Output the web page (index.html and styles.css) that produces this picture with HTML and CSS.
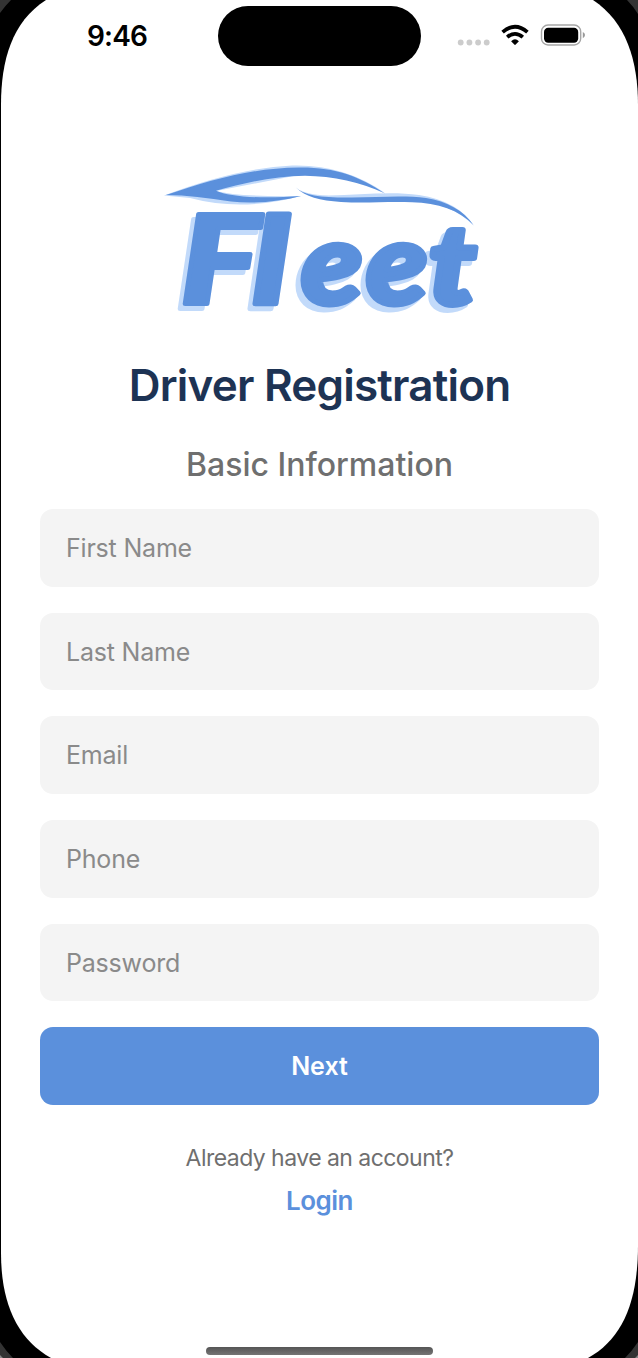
FILE: index.html
```html
<!DOCTYPE html>
<html lang="en">
<head>
<meta charset="utf-8">
<title>Driver Registration</title>
<link rel="stylesheet" href="styles.css">
</head>
<body>
<div class="device">
  <svg class="bezel" viewBox="0 0 638 1358" aria-hidden="true">
    <rect width="638" height="1358" fill="#000"/>
    <path fill="#333" d="M0 0H11Q5 6 0 13ZM638 0H627Q633 6 638 14ZM0 1342Q6 1351 13 1358H0ZM638 1342Q632 1351 625 1358H638Z"/>
    <path fill="#888" d="M0 1355L3 1358H0ZM638 1355L635 1358H638Z"/>
    <path fill="#fff" d="M1 105C1 60 12 22 46 0H593C626 22 638 60 638 105V1245C638 1303 622 1339 588 1358H51C17 1339 1 1303 1 1253Z"/>
  </svg>

  <header class="status">
    <span class="time">9:46</span>
    <span class="island"></span>
    <svg class="indicators" viewBox="456 20 132 30" aria-hidden="true">
      <g fill="#ccc"><circle cx="460.7" cy="42.5" r="2.9"/><circle cx="469.4" cy="42.5" r="2.9"/><circle cx="478.1" cy="42.5" r="2.9"/><circle cx="486.7" cy="42.5" r="2.9"/></g>
      <g fill="none" stroke="#000" stroke-width="3.8"><path d="M502.6 32.1Q515 21.3 527.4 32.1"/><path d="M507.2 37.1Q515 30.6 522.8 37.1"/></g>
      <path d="M511.1 41.2Q515 37.4 518.9 41.2L515.7 44.6Q515 45.3 514.3 44.6Z"/>
      <rect x="541.5" y="25" width="39.2" height="20" rx="6.5" fill="none" stroke="#a6a6a6" stroke-width="1.4"/>
      <rect x="544" y="27.7" width="34.2" height="15" rx="4.2"/>
      <path fill="#999" d="M582.8 32Q585 33 585 35T582.8 38.2Z"/>
    </svg>
  </header>

  <main class="content">
    <svg class="logo" viewBox="160 155 324 165" role="img" aria-label="Fleet">
      <g fill="#c2dafa">
        <path d="M165 195.5Q238 168 293 165.5Q345 164 386 193Q340 171 300 175L217 191Q240 197 302 196Q243 212 191 198Z"/>
        <path d="M296 186.5Q304 195 330 195.5C360 195 392 191 420 195Q459 201 475 226Q453 203 413 200C380 199 322 209 296 186.5Z"/>
      </g>
      <g fill="#5b90dc">
        <path d="M167 195C212 180 252 168 300 167.5C335 167 360 176 386 193.5C362 182 334 176 306 175.7C274 176 245 183 217 190.7C231 197 263 199 302 196C279 202 253 204 232 201.5C208 198 188 195 167 195Z"/>
        <path d="M297 187.5C308 197 325 197.5 353 197.5C380 197 407 195 427 198C448 201 465 211 474.5 225C460 210 439 203 413 202.3C385 201.5 366 203.5 342 202C321 200.5 306 197 297 187.5Z"/>
      </g>
      <text class="wordmark" y="303.5"><tspan class="cap" x="181" textLength="80" lengthAdjust="spacingAndGlyphs">F</tspan><tspan class="stem" x="254" textLength="36" lengthAdjust="spacingAndGlyphs">l</tspan><tspan class="round" x="302" textLength="62" lengthAdjust="spacingAndGlyphs">e</tspan><tspan class="round" x="367" textLength="62" lengthAdjust="spacingAndGlyphs">e</tspan><tspan class="cross" x="430" textLength="47" lengthAdjust="spacingAndGlyphs">t</tspan></text>
    </svg>
    <h1 class="title">Driver Registration</h1>
    <h2 class="subtitle">Basic Information</h2>
    <form class="form">
      <input class="field" type="text" placeholder="First Name">
      <input class="field" type="text" placeholder="Last Name">
      <input class="field" type="email" placeholder="Email">
      <input class="field" type="tel" placeholder="Phone">
      <input class="field" type="password" placeholder="Password">
      <button class="next" type="button">Next</button>
    </form>
    <p class="prompt">Already have an account?</p>
    <a class="login">Login</a>
  </main>
  <div class="home"></div>
</div>
</body>
</html>
```

FILE: styles.css
```css
* { box-sizing: border-box; }
body { margin: 0; font-family: Inter, "Liberation Sans", sans-serif; }
.device { position: relative; width: 638px; height: 1358px; overflow: hidden; display: flex; flex-direction: column; }
.bezel { position: absolute; inset: 0; width: 638px; height: 1358px; z-index: -1; }
.status { height: 155px; display: grid; grid-template-columns: 218px 203px 1fr; align-items: start; }
.time { padding: 19px 0 0 87px; font-size: 28px; line-height: 35px; font-weight: 600; letter-spacing: -0.8px; }
.island { height: 60px; margin-top: 6px; border-radius: 30px; background: #000; }
.indicators { width: 132px; height: 30px; margin: 20px 0 0 35px; }
.content { display: flex; flex-direction: column; align-items: center; padding: 0 39px 0 40px; }
.logo { width: 324px; height: 165px; margin-left: 3px; overflow: visible; }
.wordmark { font-family: Lato, sans-serif; font-weight: 900; font-style: italic; fill: #5b90dc; stroke: #5b90dc; stroke-width: 4px; stroke-linejoin: round; filter: drop-shadow(-5px 5px 0 #c2dafa); }
.cap { font-size: 124px; }
.stem { font-size: 121px; stroke-width: 5px; }
.round { font-size: 114px; stroke-width: 5px; }
.cross { font-size: 110px; stroke-width: 6px; }
.title { margin: 37px 0 0; font-size: 44px; line-height: 56px; font-weight: 600; letter-spacing: -0.8px; color: #1d3354; white-space: nowrap; }
.subtitle { margin: 32px 0 0; font-size: 32px; line-height: 40px; font-weight: 500; color: #6f6f6f; white-space: nowrap; }
.form { width: 559px; margin-top: 24px; display: flex; flex-direction: column; gap: 26px; }
.field, .next { width: 100%; height: 77.7px; border: 0; border-radius: 13px; font-family: inherit; font-size: 25px; }
.field { padding: 0 26px; background: #f4f4f4; letter-spacing: -0.2px; }
.field::placeholder { color: #8a8a8a; opacity: 1; }
.next { background: #5b90dc; color: #fff; font-weight: 600; }
.prompt { margin: 37px 0 0; font-size: 23px; line-height: 32px; letter-spacing: -0.54px; color: #6f6f6f; }
.login { margin-top: 10px; font-size: 26px; line-height: 33px; font-weight: 600; letter-spacing: -0.5px; color: #5b90dc; }
.home { position: absolute; left: 206px; top: 1347px; width: 227px; height: 8px; border-radius: 4px; background: linear-gradient(#555, #747474); }
```
